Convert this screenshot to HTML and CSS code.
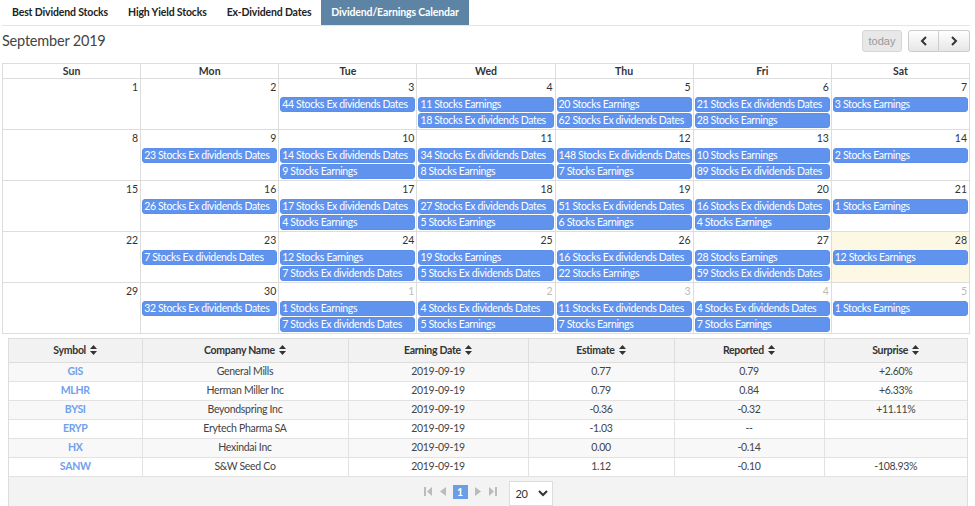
FILE: index.html
```html
<!DOCTYPE html>
<html>
<head>
<meta charset="utf-8">
<link rel="stylesheet" href="styles.css">
</head>
<body>
<div class="page">
  <nav class="tabs">
    <a class="tab">Best Dividend Stocks</a>
    <a class="tab">High Yield Stocks</a>
    <a class="tab">Ex-Dividend Dates</a>
    <a class="tab active">Dividend/Earnings Calendar</a>
  </nav>

  <div class="toolbar">
    <h2 class="title">September 2019</h2>
    <div class="buttons">
      <button class="btn today">today</button>
      <div class="btn-group">
        <button class="btn nav"><svg width="8" height="10" viewBox="0 0 8 10"><path d="M6 1 L2 5 L6 9" fill="none" stroke="#333" stroke-width="2"/></svg></button>
        <button class="btn nav"><svg width="8" height="10" viewBox="0 0 8 10"><path d="M2 1 L6 5 L2 9" fill="none" stroke="#333" stroke-width="2"/></svg></button>
      </div>
    </div>
  </div>

  <table class="cal">
    <thead>
      <tr><th>Sun</th><th>Mon</th><th>Tue</th><th>Wed</th><th>Thu</th><th>Fri</th><th>Sat</th></tr>
    </thead>
    <tbody>
      <tr>
        <td><div class="num">1</div></td>
        <td><div class="num">2</div></td>
        <td><div class="num">3</div><div class="ev">44 Stocks Ex dividends Dates</div></td>
        <td><div class="num">4</div><div class="ev">11 Stocks Earnings</div><div class="ev">18 Stocks Ex dividends Dates</div></td>
        <td><div class="num">5</div><div class="ev">20 Stocks Earnings</div><div class="ev">62 Stocks Ex dividends Dates</div></td>
        <td><div class="num">6</div><div class="ev">21 Stocks Ex dividends Dates</div><div class="ev">28 Stocks Earnings</div></td>
        <td><div class="num">7</div><div class="ev">3 Stocks Earnings</div></td>
      </tr>
      <tr>
        <td><div class="num">8</div></td>
        <td><div class="num">9</div><div class="ev">23 Stocks Ex dividends Dates</div></td>
        <td><div class="num">10</div><div class="ev">14 Stocks Ex dividends Dates</div><div class="ev">9 Stocks Earnings</div></td>
        <td><div class="num">11</div><div class="ev">34 Stocks Ex dividends Dates</div><div class="ev">8 Stocks Earnings</div></td>
        <td><div class="num">12</div><div class="ev">148 Stocks Ex dividends Dates</div><div class="ev">7 Stocks Earnings</div></td>
        <td><div class="num">13</div><div class="ev">10 Stocks Earnings</div><div class="ev">89 Stocks Ex dividends Dates</div></td>
        <td><div class="num">14</div><div class="ev">2 Stocks Earnings</div></td>
      </tr>
      <tr>
        <td><div class="num">15</div></td>
        <td><div class="num">16</div><div class="ev">26 Stocks Ex dividends Dates</div></td>
        <td><div class="num">17</div><div class="ev">17 Stocks Ex dividends Dates</div><div class="ev">4 Stocks Earnings</div></td>
        <td><div class="num">18</div><div class="ev">27 Stocks Ex dividends Dates</div><div class="ev">5 Stocks Earnings</div></td>
        <td><div class="num">19</div><div class="ev">51 Stocks Ex dividends Dates</div><div class="ev">6 Stocks Earnings</div></td>
        <td><div class="num">20</div><div class="ev">16 Stocks Ex dividends Dates</div><div class="ev">4 Stocks Earnings</div></td>
        <td><div class="num">21</div><div class="ev">1 Stocks Earnings</div></td>
      </tr>
      <tr>
        <td><div class="num">22</div></td>
        <td><div class="num">23</div><div class="ev">7 Stocks Ex dividends Dates</div></td>
        <td><div class="num">24</div><div class="ev">12 Stocks Earnings</div><div class="ev">7 Stocks Ex dividends Dates</div></td>
        <td><div class="num">25</div><div class="ev">19 Stocks Earnings</div><div class="ev">5 Stocks Ex dividends Dates</div></td>
        <td><div class="num">26</div><div class="ev">16 Stocks Ex dividends Dates</div><div class="ev">22 Stocks Earnings</div></td>
        <td><div class="num">27</div><div class="ev">28 Stocks Earnings</div><div class="ev">59 Stocks Ex dividends Dates</div></td>
        <td class="today-cell"><div class="num">28</div><div class="ev">12 Stocks Earnings</div></td>
      </tr>
      <tr>
        <td><div class="num">29</div></td>
        <td><div class="num">30</div><div class="ev">32 Stocks Ex dividends Dates</div></td>
        <td><div class="num other">1</div><div class="ev">1 Stocks Earnings</div><div class="ev">7 Stocks Ex dividends Dates</div></td>
        <td><div class="num other">2</div><div class="ev">4 Stocks Ex dividends Dates</div><div class="ev">5 Stocks Earnings</div></td>
        <td><div class="num other">3</div><div class="ev">11 Stocks Ex dividends Dates</div><div class="ev">7 Stocks Earnings</div></td>
        <td><div class="num other">4</div><div class="ev">4 Stocks Ex dividends Dates</div><div class="ev">7 Stocks Earnings</div></td>
        <td><div class="num other">5</div><div class="ev">1 Stocks Earnings</div></td>
      </tr>
    </tbody>
  </table>

  <div class="grid-wrap">
    <table class="data">
      <colgroup>
        <col class="c1"><col class="c2"><col class="c3"><col class="c4"><col class="c5"><col class="c6">
      </colgroup>
      <thead>
        <tr>
          <th>Symbol <svg class="sort" width="7" height="10" viewBox="0 0 7 10"><path d="M0 4 L3.5 0 L7 4 Z M0 6 L3.5 10 L7 6 Z" fill="#333"/></svg></th>
          <th>Company Name <svg class="sort" width="7" height="10" viewBox="0 0 7 10"><path d="M0 4 L3.5 0 L7 4 Z M0 6 L3.5 10 L7 6 Z" fill="#333"/></svg></th>
          <th>Earning Date <svg class="sort" width="7" height="10" viewBox="0 0 7 10"><path d="M0 4 L3.5 0 L7 4 Z M0 6 L3.5 10 L7 6 Z" fill="#333"/></svg></th>
          <th>Estimate <svg class="sort" width="7" height="10" viewBox="0 0 7 10"><path d="M0 4 L3.5 0 L7 4 Z M0 6 L3.5 10 L7 6 Z" fill="#333"/></svg></th>
          <th>Reported <svg class="sort" width="7" height="10" viewBox="0 0 7 10"><path d="M0 4 L3.5 0 L7 4 Z M0 6 L3.5 10 L7 6 Z" fill="#333"/></svg></th>
          <th>Surprise <svg class="sort" width="7" height="10" viewBox="0 0 7 10"><path d="M0 4 L3.5 0 L7 4 Z M0 6 L3.5 10 L7 6 Z" fill="#333"/></svg></th>
        </tr>
      </thead>
      <tbody>
        <tr><td class="sym">GIS</td><td>General Mills</td><td>2019-09-19</td><td>0.77</td><td>0.79</td><td>+2.60%</td></tr>
        <tr><td class="sym">MLHR</td><td>Herman Miller Inc</td><td>2019-09-19</td><td>0.79</td><td>0.84</td><td>+6.33%</td></tr>
        <tr><td class="sym">BYSI</td><td>Beyondspring Inc</td><td>2019-09-19</td><td>-0.36</td><td>-0.32</td><td>+11.11%</td></tr>
        <tr><td class="sym">ERYP</td><td>Erytech Pharma SA</td><td>2019-09-19</td><td>-1.03</td><td>--</td><td></td></tr>
        <tr><td class="sym">HX</td><td>Hexindai Inc</td><td>2019-09-19</td><td>0.00</td><td>-0.14</td><td></td></tr>
        <tr><td class="sym">SANW</td><td>S&amp;W Seed Co</td><td>2019-09-19</td><td>1.12</td><td>-0.10</td><td>-108.93%</td></tr>
      </tbody>
    </table>
    <div class="pager">
      <svg width="9" height="11" viewBox="0 0 9 11"><rect x="0" y="1" width="2" height="9" fill="#bbb"/><path d="M8 1 L3 5.5 L8 10 Z" fill="#bbb"/></svg>
      <svg width="8" height="11" viewBox="0 0 8 11"><path d="M7 1 L1 5.5 L7 10 Z" fill="#bbb"/></svg>
      <span class="page-num">1</span>
      <svg width="8" height="11" viewBox="0 0 8 11"><path d="M1 1 L7 5.5 L1 10 Z" fill="#bbb"/></svg>
      <svg width="9" height="11" viewBox="0 0 9 11"><path d="M1 1 L6 5.5 L1 10 Z" fill="#bbb"/><rect x="7" y="1" width="2" height="9" fill="#bbb"/></svg>
      <div class="select">20 <svg width="10" height="7" viewBox="0 0 10 7"><path d="M1 1 L5 5 L9 1" fill="none" stroke="#333" stroke-width="2"/></svg></div>
    </div>
  </div>
</div>
</body>
</html>
```

FILE: styles.css
```css
* { box-sizing: border-box; }
body {
  margin: 0;
  font-family: Lato, "Liberation Sans", sans-serif;
  color: #333;
  background: #fff;
  letter-spacing: -0.3px;
}
.page { padding: 0 5px 0 2px; }

.tabs {
  display: flex;
  height: 26px;
  border-bottom: 1px solid #e5e5e5;
}
.tab {
  display: block;
  padding: 0 10px;
  line-height: 25px;
  font-size: 10.5px;
  font-weight: bold;
  color: #222;
  white-space: nowrap;
  letter-spacing: -0.15px;
}
.tab.active {
  background: #5e84a5;
  color: #fff;
}

.toolbar {
  display: flex;
  justify-content: space-between;
  align-items: flex-start;
  height: 37px;
  padding-top: 4px;
}
.title {
  margin: 0;
  font-size: 14.5px;
  font-weight: normal;
  color: #444;
  line-height: 20px;
  padding-top: 1px;
  letter-spacing: -0.2px;
}
.buttons { display: flex; gap: 6px; }
.btn {
  height: 22px;
  border: 1px solid #ccc;
  border-radius: 3px;
  font-family: "Liberation Sans", sans-serif;
  font-size: 11px;
  padding: 0;
  display: flex;
  align-items: center;
  justify-content: center;
  letter-spacing: 0;
}
.btn.today {
  width: 40px;
  background: #e8e8e8;
  color: #999;
  border-color: #d6d6d6;
}
.btn-group { display: flex; }
.btn.nav {
  width: 31px;
  background: linear-gradient(#fff, #e6e6e6);
}
.btn-group .btn.nav:first-child { border-radius: 3px 0 0 3px; }
.btn-group .btn.nav:last-child { border-radius: 0 3px 3px 0; border-left: none; }

.cal {
  width: 968px;
  border-collapse: collapse;
  table-layout: fixed;
}
.cal th, .cal td { border: 1px solid #ddd; padding: 0; }
.cal th {
  font-size: 10.5px;
  font-weight: bold;
  height: 15px;
  line-height: 13px;
  color: #333;
  letter-spacing: 0;
}
.cal td {
  height: 51px;
  vertical-align: top;
}
.num {
  text-align: right;
  font-size: 10.5px;
  line-height: 14px;
  padding: 1px 2px 3px 0;
  color: #333;
  letter-spacing: 0;
}
.num.other { color: #bbb; }
.today-cell { background: #fcf8e3; }
.ev {
  margin: 0 1px 1px 1px;
  background: #5f93ee;
  border: 1px solid #5b8fe9;
  border-radius: 3px;
  color: #fff;
  font-size: 10.5px;
  line-height: 13px;
  padding-left: 1px;
  white-space: nowrap;
  overflow: hidden;
  letter-spacing: -0.35px;
}

.grid-wrap {
  margin: 4px 4px 0 6px;
  border: 1px solid #ddd;
  background: #f3f3f3;
  width: 960px;
}
.data {
  width: 100%;
  border-collapse: collapse;
  table-layout: fixed;
  font-size: 10.5px;
}
.c1 { width: 133px; } .c2 { width: 206px; } .c3 { width: 180px; }
.c4 { width: 146px; } .c5 { width: 150px; } .c6 { width: 143px; }
.data th {
  height: 23px;
  background: #f2f2f2;
  font-weight: bold;
  color: #333;
  border: 1px solid #ddd;
  border-top: none;
  padding: 0;
}
.data th:first-child, .data td:first-child { border-left: none; }
.data th:last-child, .data td:last-child { border-right: none; }
.sort { vertical-align: -1px; margin-left: 2px; }
.data td {
  height: 19px;
  text-align: center;
  border: 1px solid #e2e2e2;
  background: #fff;
  color: #444;
  padding: 0;
  line-height: 17px;
}
.data tbody tr:nth-child(odd) td { background: #f8f8f8; }
.data td.sym { color: #6fa1ee; font-weight: bold; }

.pager {
  height: 30px;
  display: flex;
  align-items: center;
  justify-content: center;
  gap: 6px;
}
.page-num {
  background: #6a9fe8;
  color: #fff;
  font-weight: bold;
  font-size: 10.5px;
  width: 15px;
  height: 14px;
  line-height: 14px;
  text-align: center;
}
.select {
  margin-left: 6px;
  width: 44px;
  height: 25px;
  background: #fff;
  border: 1px solid #ddd;
  display: flex;
  align-items: center;
  gap: 10px;
  padding-left: 6px;
  font-size: 11px;
  margin-top: 3px;
}
```
